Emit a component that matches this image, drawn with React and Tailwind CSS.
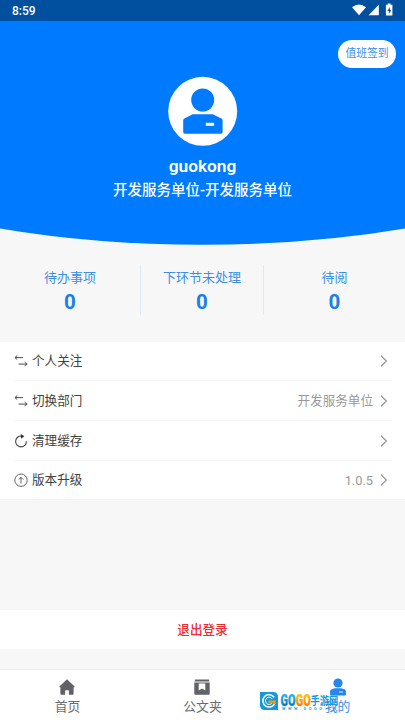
import clsx from "clsx";

const stats = [
  { label: "待办事项", value: 0, width: "w-[141px]" },
  { label: "下环节未处理", value: 0, width: "w-[123px]" },
  { label: "待阅", value: 0, width: "w-[141px]" },
];

const rows = [
  { label: "个人关注", icon: SwapIcon, height: "h-[39px]" },
  { label: "切换部门", icon: SwapIcon, value: "开发服务单位", height: "h-10" },
  { label: "清理缓存", icon: RefreshIcon, height: "h-10" },
  { label: "版本升级", icon: UpgradeIcon, value: "1.0.5", height: "h-[39px]" },
];

const tabs = [
  { label: "首页", icon: HomeIcon },
  { label: "公文夹", icon: FolderIcon },
  { label: "我的", icon: MineIcon, active: true },
];

function SwapIcon() {
  return (
    <svg viewBox="0 0 14 14" className="size-3.5" fill="none" stroke="#4c4c4c" strokeWidth="1">
      <path d="M3.2 1.5 1 3.6l2.2 2M1 3.6H9M10.7 8l2.4 2.1-2.4 2M13.1 10.1H4.6" />
    </svg>
  );
}

function RefreshIcon() {
  return (
    <svg viewBox="0 0 14 14" className="size-3.5" fill="none" stroke="#444" strokeWidth="1.1">
      <path d="M8.2 2.2A5.4 5.4 0 1 0 12.4 7.2" />
      <path d="M6.7.1 10.4 2.3 7.1 4.8Z" fill="#333" stroke="none" />
    </svg>
  );
}

function UpgradeIcon() {
  return (
    <svg viewBox="0 0 14 14" className="size-3.5" fill="none" stroke="#555" strokeWidth="0.9">
      <circle cx="7" cy="7.2" r="6.2" />
      <path d="M7 10.5V4.4M4.7 6.6 7 4.3l2.3 2.3" />
    </svg>
  );
}

function Chevron() {
  return (
    <svg viewBox="0 0 8 14" className="w-2 h-3.5" fill="none" stroke="#999" strokeWidth="1.3">
      <path d="M1 1.7 6.4 7 1 12.3" />
    </svg>
  );
}

function HomeIcon() {
  return (
    <svg viewBox="0 0 16 16" className="size-4" fill="#606266">
      <path d="M8 .2 15.6 7.4q.4.9-.7.9h-.3V15q0 .8-.8.8H9.9v-3.7q0-.8-.8-.8H6.9q-.8 0-.8.8v3.7H2.2q-.8 0-.8-.8V8.3h-.3q-1.1 0-.7-.9Z" />
    </svg>
  );
}

function FolderIcon() {
  return (
    <svg viewBox="0 0 16 16" className="size-4" fill="#606266">
      <path d="M1.2.4h13.6l.7 2.2H.5Z" />
      <path fillRule="evenodd" d="M.3 3.5h15.4v11.2q0 1-1 1H1.3q-1 0-1-1ZM4.7 4.5v7L8 9.6l3.3 1.9v-7Z" />
    </svg>
  );
}

function MineIcon() {
  return (
    <svg viewBox="0 0 16 18" className="w-4 h-[18px]" fill="#2486ee">
      <circle cx="8" cy="5" r="4.6" />
      <path fillRule="evenodd" d="M.1 13.2q0-1.2 1.1-1.7l3.5-1.2h6.6l3.5 1.2q1.1.5 1.1 1.7v3.3q0 1-1 1H1.1q-1 0-1-1ZM9.2 13.6v.9h3.5v-.9Z" />
    </svg>
  );
}

function Avatar() {
  return (
    <svg viewBox="0 0 70 70" className="size-[70px]">
      <circle cx="34.7" cy="35.3" r="34.5" fill="#fff" />
      <circle cx="34.7" cy="24" r="11.5" fill="#007bff" />
      <path d="M24.6 38.2h20.2l8.6 4.3q1.2.6 1.2 2V56q0 1.8-1.8 1.8H17q-1.8 0-1.8-1.8V44.5q0-1.4 1.2-2Z" fill="#007bff" />
      <path d="M37.8 46.8h8.3v3h-8.3z" fill="#fff" />
    </svg>
  );
}

function StatusBar() {
  return (
    <div className="flex h-[21px] items-center justify-between bg-[#00509f] pl-3 pr-[11px] text-white">
      <span className="text-xs font-medium leading-none">8:59</span>
      <svg viewBox="0 0 42 14" className="-mt-px h-3.5 w-[42px]" fill="#fff">
        <path d="M0 4.3Q7-1.4 14 4.3L7 12.2Z" />
        <path d="M26.8 1.7v10.5H16.5Z" />
        <path fillRule="evenodd" d="M35.8.6h2.8v1.2h1.8v10.8h-6.5V1.8h1.9Zm2 3.3-2.4 4h1.5v3l2.3-4h-1.4Z" />
      </svg>
    </div>
  );
}

function Header() {
  return (
    <div className="relative h-[224px]">
      <svg viewBox="0 0 405 224" className="absolute inset-0 h-[224px] w-[405px]">
        <path d="M0 0H405V207.5Q310 223.7 202.5 223.7T0 207.5Z" fill="#007bff" />
      </svg>
      <button className="absolute right-[9px] top-[18.5px] h-7 w-[58px] rounded-full bg-white pt-[2px] text-[10.8px] text-[#3a8ee6]">
        值班签到
      </button>
      <div className="relative flex flex-col items-center pt-[55px] text-white">
        <Avatar />
        <div className="mt-2 text-[17.3px] font-semibold leading-6">guokong</div>
        <div className="mt-px text-[14.5px] font-medium leading-6">开发服务单位-开发服务单位</div>
      </div>
    </div>
  );
}

function Watermark() {
  return (
    <div className="absolute left-[260px] top-[22px] flex gap-[3px]">
      <svg viewBox="0 0 18 18" className="size-[18px]">
        <path d="M0 0H13Q18 0 18 5V18H5Q0 18 0 13Z" fill="#1599d8" />
        <path d="M14.2 5.3A6.2 6.2 0 1 0 14.9 11" fill="none" stroke="#fff" strokeWidth="1.5" />
        <path d="M12.2 7A3.6 3.6 0 1 0 11.8 11.2" fill="none" stroke="#fff" strokeWidth="1" />
        <path d="M8.3 8.5H16q-.2 3-2.2 4.8V10.7H8.3Z" fill="#ff9d0a" />
      </svg>
      <div className="flex flex-col">
        <svg viewBox="0 0 58 14" className="h-3.5 w-[58px] overflow-visible">
          <defs>
            <linearGradient id="gogoBlue" x1="0" y1="0" x2="0" y2="1">
              <stop offset="0.2" stopColor="#22b8ef" />
              <stop offset="0.8" stopColor="#087abf" />
            </linearGradient>
            <linearGradient id="gogoOrange" x1="0" y1="0" x2="0" y2="1">
              <stop offset="0.2" stopColor="#ffc400" />
              <stop offset="0.8" stopColor="#ff7a00" />
            </linearGradient>
          </defs>
          <g fontFamily="Roboto, sans-serif" fontSize="16.2" fontWeight="900" strokeWidth="0.3">
            <text x="-0.5" y="13.6" textLength="15" lengthAdjust="spacingAndGlyphs" fill="url(#gogoBlue)" stroke="url(#gogoBlue)">GO</text>
            <text x="14.7" y="13.6" textLength="15" lengthAdjust="spacingAndGlyphs" fill="url(#gogoOrange)" stroke="url(#gogoOrange)">GO</text>
          </g>
          <text x="29.6" y="12.6" textLength="27.6" lengthAdjust="spacingAndGlyphs" fontFamily="'Noto Sans CJK SC', sans-serif" fontSize="11" fontWeight="700" fill="#1598dc">手游网</text>
        </svg>
        <svg viewBox="0 0 58 5" className="h-[5px] w-[58px]">
          <text x="1" y="4" textLength="54" fontFamily="Roboto, sans-serif" fontSize="4" fontWeight="700" fill="#35a5da">WWW.GOGO.CN</text>
        </svg>
      </div>
    </div>
  );
}

export default function App() {
  return (
    <div className="flex h-[720px] w-[405px] flex-col overflow-hidden bg-[#f7f7f7] font-[Roboto,'Noto_Sans_CJK_SC',sans-serif]">
      <StatusBar />
      <Header />

      <div className="flex h-[97px] pt-5">
        {stats.map((s, i) => (
          <div
            key={s.label}
            className={clsx("flex h-[50px] flex-col items-center", s.width, i < 2 && "border-r border-[#dcebf7]")}
          >
            <div className="mt-[3px] text-[13px] leading-5 text-[#3a8fe8]">{s.label}</div>
            <div className="mt-0.5 text-[20.5px] font-bold leading-6 text-[#1b7fe6]">{s.value}</div>
          </div>
        ))}
      </div>

      <div className="bg-white">
        {rows.map(({ label, icon: Icon, value, height }, i) => (
          <div key={label} className={clsx("flex items-center border-b border-[#f3f3f3]", height, i < 3 ? "ml-3.5 mr-[13px] pr-1" : "pl-3.5 pr-[17px]")}>
            <Icon />
            <span className="ml-1 pt-px text-[12.6px] text-[#424242]">{label}</span>
            <span className={clsx("ml-auto mr-[7px] text-[#999]", i === 3 ? "pt-px text-[12.8px]" : "pt-px text-[12.6px]")}>{value}</span>
            <Chevron />
          </div>
        ))}
      </div>

      <button className="mt-[110px] h-[39px] bg-white pt-px text-[12.6px] font-medium text-[#ee2b31]">退出登录</button>

      <div className="relative mt-5 flex h-[51px] border-t border-[#eeeeee] bg-white">
        {tabs.map(({ label, icon: Icon, active }) => (
          <div key={label} className="flex flex-1 flex-col items-center">
            <div className={active ? "mt-2" : "mt-[9px] mb-px -ml-px"}>
              <Icon />
            </div>
            <div className={clsx("mt-px text-[12.8px] leading-5", active ? "text-[#3d8fe9]" : "text-[#6c6c6c]")}>{label}</div>
          </div>
        ))}
        <Watermark />
      </div>
    </div>
  );
}
